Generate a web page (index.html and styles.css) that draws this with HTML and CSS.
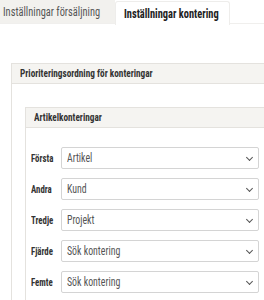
FILE: index.html
```html
<!DOCTYPE html>
<html lang="sv">
<head>
    <meta charset="UTF-8">
    <meta name="viewport" content="width=device-width, initial-scale=1.0">
    <title>Inställningar kontering</title>
    <link rel="stylesheet" href="styles.css">
</head>
<body>
    <div class="tabs">
        <div class="tab"><span class="cn">Inställningar försäljning</span></div>
        <div class="tab active"><span class="cn">Inställningar kontering</span></div>
    </div>

    <div class="page">
        <div class="panel">
            <div class="panel-header"><span class="cn">Prioriteringsordning för konteringar</span></div>
            <div class="panel-body">
                <div class="panel inner">
                    <div class="panel-header"><span class="cn">Artikelkonteringar</span></div>
                    <div class="panel-body rows">
                        <label class="row-label"><span class="cn">Första</span></label>
                        <div class="select"><span class="cn">Artikel</span></div>
                        <label class="row-label"><span class="cn">Andra</span></label>
                        <div class="select"><span class="cn">Kund</span></div>
                        <label class="row-label"><span class="cn">Tredje</span></label>
                        <div class="select"><span class="cn">Projekt</span></div>
                        <label class="row-label"><span class="cn">Fjärde</span></label>
                        <div class="select"><span class="cn">Sök kontering</span></div>
                        <label class="row-label"><span class="cn">Femte</span></label>
                        <div class="select"><span class="cn">Sök kontering</span></div>
                    </div>
                </div>
            </div>
        </div>
    </div>
</body>
</html>
```

FILE: styles.css
```css
:root {
    --text-color: #333;
    --muted: #555;
    --header-bg: #f5f4f1;
    --border: #e4e2de;
}

body {
    font-family: "Roboto Condensed", Roboto, sans-serif;
    margin: 0;
    padding: 0;
    background: white;
    color: var(--text-color);
    overflow: hidden;
    width: 264px;
    white-space: nowrap;
}

.cn {
    display: inline-block;
    transform: scaleX(0.84);
    transform-origin: left center;
}

.tabs {
    display: flex;
    height: 23px;
    border-bottom: 1px solid #f0efed;
}

.tab {
    width: 115px;
    padding-left: 3px;
    box-sizing: border-box;
    background: #f2f1ee;
    color: var(--muted);
    font-size: 13px;
    line-height: 24px;
}

.tab .cn {
    transform: scaleX(0.8);
}

.tab.active {
    background: white;
    color: #222;
    font-weight: bold;
    padding-left: 8px;
    border: 1px solid #eeedeb;
    border-bottom: none;
    border-radius: 3px 3px 0 0;
    height: 24px;
    line-height: 24px;
    margin-top: 1px;
}

.page {
    padding: 39px 0 0 11px;
}

.panel {
    border: 1px solid var(--border);
    width: 268px;
}

.panel-header {
    background: var(--header-bg);
    border-bottom: 1px solid var(--border);
    height: 19px;
    line-height: 19px;
    padding-left: 8px;
    font-size: 11px;
    font-weight: bold;
}

.panel-body {
    padding: 23px 0 0 13px;
}

.panel.inner {
    width: 240px;
}

.rows {
    display: grid;
    grid-template-columns: 30px 198px;
    row-gap: 9px;
    align-items: center;
    padding: 19px 0 20px 5px;
}

.row-label {
    font-size: 10.5px;
    font-weight: bold;
}

.select {
    height: 22px;
    box-sizing: border-box;
    border: 1px solid #d4d4d4;
    border-radius: 2px;
    padding-left: 5px;
    line-height: 20px;
    font-size: 12px;
    color: var(--muted);
    position: relative;
}

.select .cn {
    transform: scaleX(0.82);
}

.select::after {
    content: "";
    position: absolute;
    right: 6px;
    top: 7px;
    width: 4px;
    height: 4px;
    border-right: 1.3px solid #555;
    border-bottom: 1.3px solid #555;
    transform: rotate(45deg);
}
```
